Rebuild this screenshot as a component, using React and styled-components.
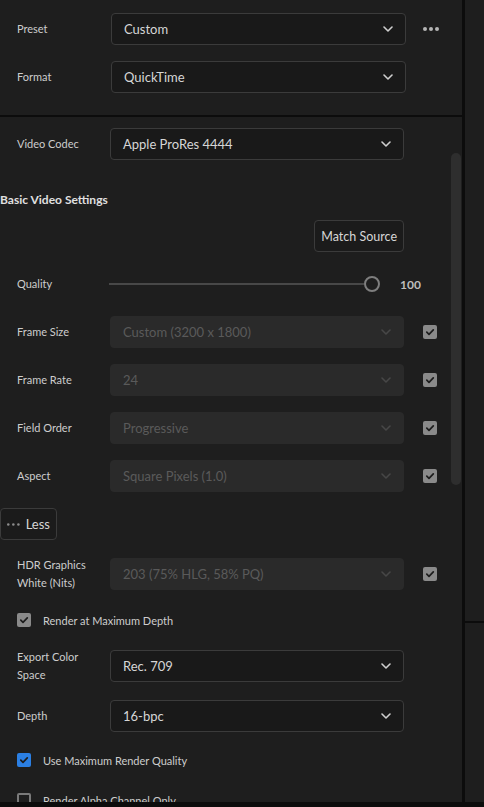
import styled, { createGlobalStyle } from "styled-components";

const GlobalStyle = createGlobalStyle`
  html, body {
    margin: 0;
    padding: 0;
    background: #0c0c0c;
    overflow: hidden;
  }
  body {
    font-family: Lato, "Open Sans", "Liberation Sans", sans-serif;
    -webkit-font-smoothing: antialiased;
  }
  * {
    box-sizing: border-box;
  }
`;

const Screen = styled.div`
  display: flex;
  gap: 3px;
  width: 484px;
  height: 802px;
  background: #0c0c0c;
  overflow: hidden;
`;

const MainPanel = styled.div`
  width: 462px;
  display: flex;
  flex-direction: column;
  gap: 2px;
`;

const SidePanel = styled.div`
  flex: 1;
  display: flex;
  flex-direction: column;
  gap: 2px;
`;

const SideBlock = styled.div`
  background: #1e1e1e;
  height: ${(p) => (p.$h ? `${p.$h}px` : "auto")};
  flex: ${(p) => (p.$h ? "none" : 1)};
`;

const TopSection = styled.div`
  height: 115px;
  flex: none;
  background: #1e1e1e;
  padding-top: 13px;
  display: flex;
  flex-direction: column;
  gap: 16px;
`;

const ScrollSection = styled.div`
  position: relative;
  flex: 1;
  min-height: 0;
  background: #1e1e1e;
  overflow: hidden;
  padding-top: 11px;
  display: flex;
  flex-direction: column;
  gap: 16px;
  & > * {
    flex-shrink: 0;
  }
`;

const Scrollbar = styled.div`
  position: absolute;
  top: 36px;
  right: 1px;
  width: 10px;
  height: 332px;
  border-radius: 5px;
  background: #2e2e2e;
`;

const Row = styled.div`
  display: grid;
  grid-template-columns: ${(p) => (p.$top ? "94px 295px 1fr" : "93px 294px 1fr")};
  align-items: center;
  padding-left: 17px;
`;

const Label = styled.div`
  font-size: 11px;
  line-height: 18px;
  color: #cdcdcd;
`;

const Dropdown = styled.div`
  height: 32px;
  display: flex;
  align-items: center;
  justify-content: space-between;
  padding: 0 12px 0 12px;
  border-radius: 4px;
  font-size: 13px;
  background: ${(p) => (p.$disabled ? "#2a2a2a" : "#191919")};
  border: 1px solid ${(p) => (p.$disabled ? "#2a2a2a" : "#3b3b3b")};
  color: ${(p) => (p.$disabled ? "#5a5a5a" : "#d6d6d6")};
`;

const Side = styled.div`
  display: flex;
  align-items: center;
  padding-left: ${(p) => (p.$top ? "17px" : "19px")};
`;

const Heading = styled.div`
  margin: 16px 0 -4px;
  height: 16px;
  line-height: 16px;
  font-size: 12px;
  font-weight: 700;
  color: #e0e0e0;
`;

const Button = styled.div`
  height: 32px;
  display: inline-flex;
  align-items: center;
  gap: 6px;
  padding: 0 6px;
  border: 1px solid #3b3b3b;
  border-radius: 4px;
  background: #1b1b1b;
  font-size: 12.5px;
  color: #d6d6d6;
`;

const MatchButton = styled(Button)`
  justify-self: end;
`;

const LessButton = styled(Button)`
  align-self: flex-start;
  width: 57px;
  padding-left: 6px;
  gap: 6px;
  font-size: 13px;
`;

const SliderArea = styled.div`
  grid-column: 2 / 4;
  display: flex;
  align-items: center;
  height: 32px;
`;

const Track = styled.div`
  width: 255px;
  height: 2px;
  background: #484848;
  margin-left: -1px;
`;

const Thumb = styled.div`
  width: 16px;
  height: 16px;
  border-radius: 50%;
  border: 2px solid #7e7e7e;
  background: #1e1e1e;
`;

const Value = styled.div`
  margin-left: 20px;
  font-size: 12px;
  font-weight: 700;
  color: #bdbdbd;
`;

const CheckRow = styled.div`
  height: 24px;
  display: flex;
  align-items: center;
  gap: 12px;
  padding-left: 17px;
  font-size: 11px;
  color: #cdcdcd;
`;

const Box = styled.span`
  width: 14px;
  height: 14px;
  flex: none;
  border-radius: 2px;
  display: inline-flex;
  align-items: center;
  justify-content: center;
  background: ${(p) =>
    p.$kind === "blue" ? "#2b7fe3" : p.$kind === "off" ? "transparent" : "#8a8a8a"};
  border: ${(p) => (p.$kind === "off" ? "2px solid #7a7a7a" : "none")};
`;

const Chevron = ({ disabled }) => (
  <svg width="10" height="6" viewBox="0 0 10 6">
    <path
      d="M1 1 L5 5 L9 1"
      fill="none"
      stroke={disabled ? "#474747" : "#cfcfcf"}
      strokeWidth="1.6"
      strokeLinecap="round"
      strokeLinejoin="round"
    />
  </svg>
);

const Dots = ({ size = 4, gap = 6, color = "#b5b5b5" }) => {
  const r = size / 2;
  const w = gap * 2 + size;
  return (
    <svg width={w} height={size} viewBox={`0 0 ${w} ${size}`}>
      {[0, 1, 2].map((i) => (
        <circle key={i} cx={r + i * gap} cy={r} r={r} fill={color} />
      ))}
    </svg>
  );
};

const Checkbox = ({ kind = "gray" }) => (
  <Box $kind={kind}>
    {kind !== "off" && (
      <svg width="10" height="10" viewBox="0 0 10 10">
        <path
          d="M1.8 5.2 L4 7.3 L8.3 2.8"
          fill="none"
          stroke="#1d1d1d"
          strokeWidth="1.7"
          strokeLinecap="round"
          strokeLinejoin="round"
        />
      </svg>
    )}
  </Box>
);

const Select = ({ value, disabled }) => (
  <Dropdown $disabled={disabled}>
    <span>{value}</span>
    <Chevron disabled={disabled} />
  </Dropdown>
);

const lockedRows = [
  { label: "Frame Size", value: "Custom (3200 x 1800)" },
  { label: "Frame Rate", value: "24" },
  { label: "Field Order", value: "Progressive" },
  { label: "Aspect", value: "Square Pixels (1.0)" },
];

export default function App() {
  return (
    <>
      <GlobalStyle />
      <Screen>
        <MainPanel>
          <TopSection>
            <Row $top>
              <Label>Preset</Label>
              <Select value="Custom" />
              <Side $top>
                <Dots />
              </Side>
            </Row>
            <Row $top>
              <Label>Format</Label>
              <Select value="QuickTime" />
            </Row>
          </TopSection>

          <ScrollSection>
            <Row>
              <Label>Video Codec</Label>
              <Select value="Apple ProRes 4444" />
            </Row>
            <Heading>Basic Video Settings</Heading>
            <Row>
              <span />
              <MatchButton>Match Source</MatchButton>
            </Row>
            <Row>
              <Label>Quality</Label>
              <SliderArea>
                <Track />
                <Thumb />
                <Value>100</Value>
              </SliderArea>
            </Row>
            {lockedRows.map((row) => (
              <Row key={row.label}>
                <Label>{row.label}</Label>
                <Select value={row.value} disabled />
                <Side>
                  <Checkbox />
                </Side>
              </Row>
            ))}
            <LessButton>
              <Dots size={3} gap={6} color="#8c8c8c" />
              Less
            </LessButton>
            <Row>
              <Label>
                HDR Graphics
                <br />
                White (Nits)
              </Label>
              <Select value="203 (75% HLG, 58% PQ)" disabled />
              <Side>
                <Checkbox />
              </Side>
            </Row>
            <CheckRow>
              <Checkbox />
              Render at Maximum Depth
            </CheckRow>
            <Row>
              <Label>
                Export Color
                <br />
                Space
              </Label>
              <Select value="Rec. 709" />
            </Row>
            <Row>
              <Label>Depth</Label>
              <Select value="16-bpc" />
            </Row>
            <CheckRow>
              <Checkbox kind="blue" />
              Use Maximum Render Quality
            </CheckRow>
            <CheckRow>
              <Checkbox kind="off" />
              Render Alpha Channel Only
            </CheckRow>
            <Scrollbar />
          </ScrollSection>
        </MainPanel>
        <SidePanel>
          <SideBlock $h={621} />
          <SideBlock />
        </SidePanel>
      </Screen>
    </>
  );
}
